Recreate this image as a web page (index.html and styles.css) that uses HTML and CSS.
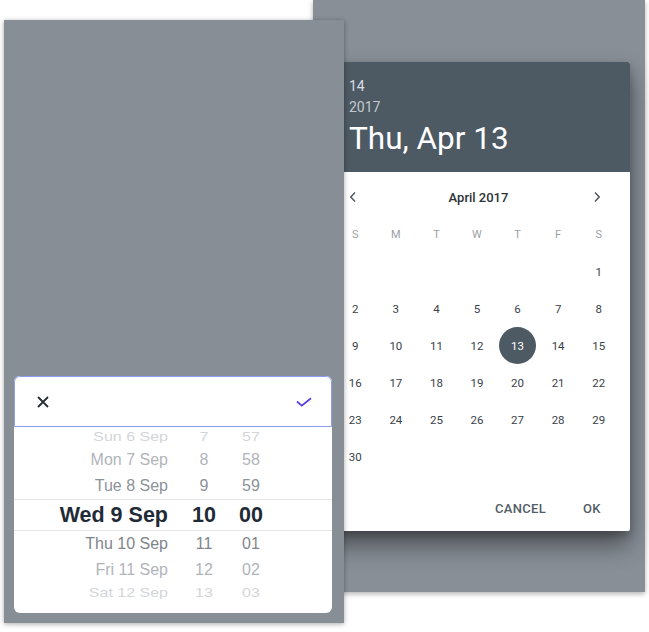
FILE: index.html
```html
<!DOCTYPE html>
<html lang="en">
  <head>
    <meta charset="UTF-8" />
    <title>Date pickers</title>
    <link rel="stylesheet" href="styles.css">
  </head>
  <body>
    <div class="stage">
      <!-- android style dialog, behind -->
      <div class="screen screen-back">
        <div class="dialog">
          <div class="dialog-head">
            <div class="head-small">14</div>
            <div class="head-small head-year">2017</div>
            <div class="head-date">Thu, Apr 13</div>
          </div>

          <div class="month-nav">
            <svg class="chev" width="8" height="12" viewBox="0 0 8 12">
              <polyline points="6,1.5 1.8,6 6,10.5" />
            </svg>
            <div class="month-title">April 2017</div>
            <svg class="chev" width="8" height="12" viewBox="0 0 8 12">
              <polyline points="2,1.5 6.2,6 2,10.5" />
            </svg>
          </div>

          <div class="weekdays">
            <span>S</span><span>M</span><span>T</span><span>W</span><span>T</span><span>F</span><span>S</span>
          </div>

          <div class="days" id="days"></div>

          <div class="actions">
            <button class="action">CANCEL</button>
            <button class="action action-ok">OK</button>
          </div>
        </div>
      </div>

      <!-- ios style wheel picker, in front -->
      <div class="screen screen-front">
        <div class="sheet">
          <div class="sheet-head">
            <svg width="12" height="12" viewBox="0 0 12 12">
              <path class="close" d="M1 1 L11 11 M11 1 L1 11" />
            </svg>
            <svg width="16" height="10" viewBox="0 0 16 10">
              <polyline class="done" points="1,4.5 5.8,8.6 15,1.2" />
            </svg>
          </div>
          <div class="wheel">
            <div class="wheel-inner">
              <div class="row far far-top"><span class="d">Sun 6 Sep</span><span class="h">7</span><span class="m">57</span></div>
              <div class="row mid"><span class="d">Mon 7 Sep</span><span class="h">8</span><span class="m">58</span></div>
              <div class="row near"><span class="d">Tue 8 Sep</span><span class="h">9</span><span class="m">59</span></div>
              <div class="row selected"><span class="d">Wed 9 Sep</span><span class="h">10</span><span class="m">00</span></div>
              <div class="row near-b"><span class="d">Thu 10 Sep</span><span class="h">11</span><span class="m">01</span></div>
              <div class="row mid"><span class="d">Fri 11 Sep</span><span class="h">12</span><span class="m">02</span></div>
              <div class="row far far-bottom"><span class="d">Sat 12 Sep</span><span class="h">13</span><span class="m">03</span></div>
            </div>
          </div>
        </div>
      </div>
    </div>

    <script>
      // April 2017 starts on a saturday
      const days = document.getElementById("days");
      const firstDay = 6;
      const selected = 13;

      for (let i = 0; i < firstDay; i++) {
        days.appendChild(document.createElement("span"));
      }
      for (let d = 1; d <= 30; d++) {
        const cell = document.createElement("span");
        const num = document.createElement("span");
        num.className = d === selected ? "num num-selected" : "num";
        num.textContent = d;
        cell.appendChild(num);
        days.appendChild(cell);
      }
    </script>
  </body>
</html>
```

FILE: styles.css
```css
body {
  margin: 0;
  padding: 0;
  background-color: white;
  font-family: Roboto, "Liberation Sans", sans-serif;
}

.stage {
  position: relative;
  width: 649px;
  height: 632px;
  overflow: hidden;
}

.screen {
  position: absolute;
  box-sizing: border-box;
}

/* back screen */
.screen-back {
  left: 313px;
  top: 0;
  width: 332px;
  height: 592px;
  background-color: #888f97;
  box-shadow: 0 2px 5px rgba(0, 0, 0, 0.3);
  padding: 62px 0 0 11px;
}

.dialog {
  width: 306px;
  background-color: white;
  border-radius: 2px;
  box-shadow: 0 14px 24px rgba(0, 0, 0, 0.45), 0 4px 8px rgba(0, 0, 0, 0.2);
}

.dialog-head {
  background-color: #4d5963;
  border-radius: 2px 2px 0 0;
  padding: 14px 0 12px 25px;
  color: white;
}

.head-small {
  font-size: 14px;
  line-height: 21px;
  color: #dadee1;
}

.head-year {
  color: #c3c9ce;
}

.head-date {
  font-size: 31.5px;
  line-height: 42px;
  color: white;
}

.month-nav {
  display: flex;
  align-items: center;
  height: 50px;
  padding: 0 29px 0 25px;
}

.chev polyline {
  fill: none;
  stroke: #50585f;
  stroke-width: 1.5;
}

.month-title {
  flex: 1;
  text-align: center;
  padding-left: 7px;
  font-size: 13px;
  font-weight: 500;
  color: #2c3238;
}

.weekdays,
.days {
  display: grid;
  grid-template-columns: repeat(7, 1fr);
  padding: 0 11px;
}

.weekdays span {
  height: 26px;
  line-height: 26px;
  text-align: center;
  font-size: 11px;
  color: #9ca1a6;
}

.days {
  padding-top: 5px;
  grid-auto-rows: 37px;
}

.days > span {
  display: flex;
  align-items: center;
  justify-content: center;
}

.num {
  display: flex;
  align-items: center;
  justify-content: center;
  width: 37px;
  height: 37px;
  border-radius: 50%;
  font-size: 11.5px;
  color: #39414a;
}

.num-selected {
  background-color: #4d5963;
  color: white;
}

.actions {
  display: flex;
  justify-content: flex-end;
  gap: 6px;
  padding: 15px 6px 5px 0;
}

.action {
  min-width: 64px;
  height: 36px;
  padding: 0 8px;
  border: none;
  background: none;
  font-family: Roboto, sans-serif;
  font-size: 13px;
  font-weight: 500;
  letter-spacing: 0.3px;
  color: #535d66;
}

/* front screen */
.screen-front {
  left: 4px;
  top: 20px;
  width: 340px;
  height: 603px;
  background-color: #878e95;
  box-shadow: 0 1px 5px rgba(0, 0, 0, 0.35);
  padding: 0 12px 10px 10px;
  display: flex;
  flex-direction: column;
  justify-content: flex-end;
}

.sheet {
  background-color: white;
  border-radius: 6px;
  overflow: hidden;
  padding-bottom: 14px;
}

.sheet-head {
  box-sizing: border-box;
  height: 51px;
  border: 1px solid #8d9ef2;
  border-radius: 6px 6px 0 0;
  display: flex;
  align-items: center;
  justify-content: space-between;
  padding: 0 19px 0 22px;
}

.close {
  fill: none;
  stroke: #232c36;
  stroke-width: 1.8;
}

.done {
  fill: none;
  stroke: #5a3ee6;
  stroke-width: 1.8;
}

.wheel {
  height: 172px;
  overflow: hidden;
}

.wheel-inner {
  margin-top: -6px;
  font-family: "Liberation Sans", Arial, sans-serif;
}

.row {
  display: flex;
  align-items: center;
  height: 26px;
  font-size: 16px;
}

.row .d {
  box-sizing: border-box;
  width: 164px;
  padding-right: 10px;
  text-align: right;
}

.row .h {
  width: 52px;
  text-align: center;
}

.row .m {
  width: 42px;
  text-align: center;
}

/* rows squash a little towards the edges of the wheel */
.far {
  color: #d3d6d9;
}

.far-top {
  transform: scaleY(0.8);
  transform-origin: bottom;
}

.far-bottom {
  transform: scaleY(0.8);
  transform-origin: top;
}

.mid {
  color: #b0b4b9;
}

.near {
  color: #8c9298;
}

.near-b {
  color: #7f858b;
}

.selected {
  box-sizing: border-box;
  height: 32px;
  border-top: 1px solid #e4e6e9;
  border-bottom: 1px solid #e4e6e9;
  font-size: 21.5px;
  font-weight: bold;
  color: #1f2b37;
}
```
